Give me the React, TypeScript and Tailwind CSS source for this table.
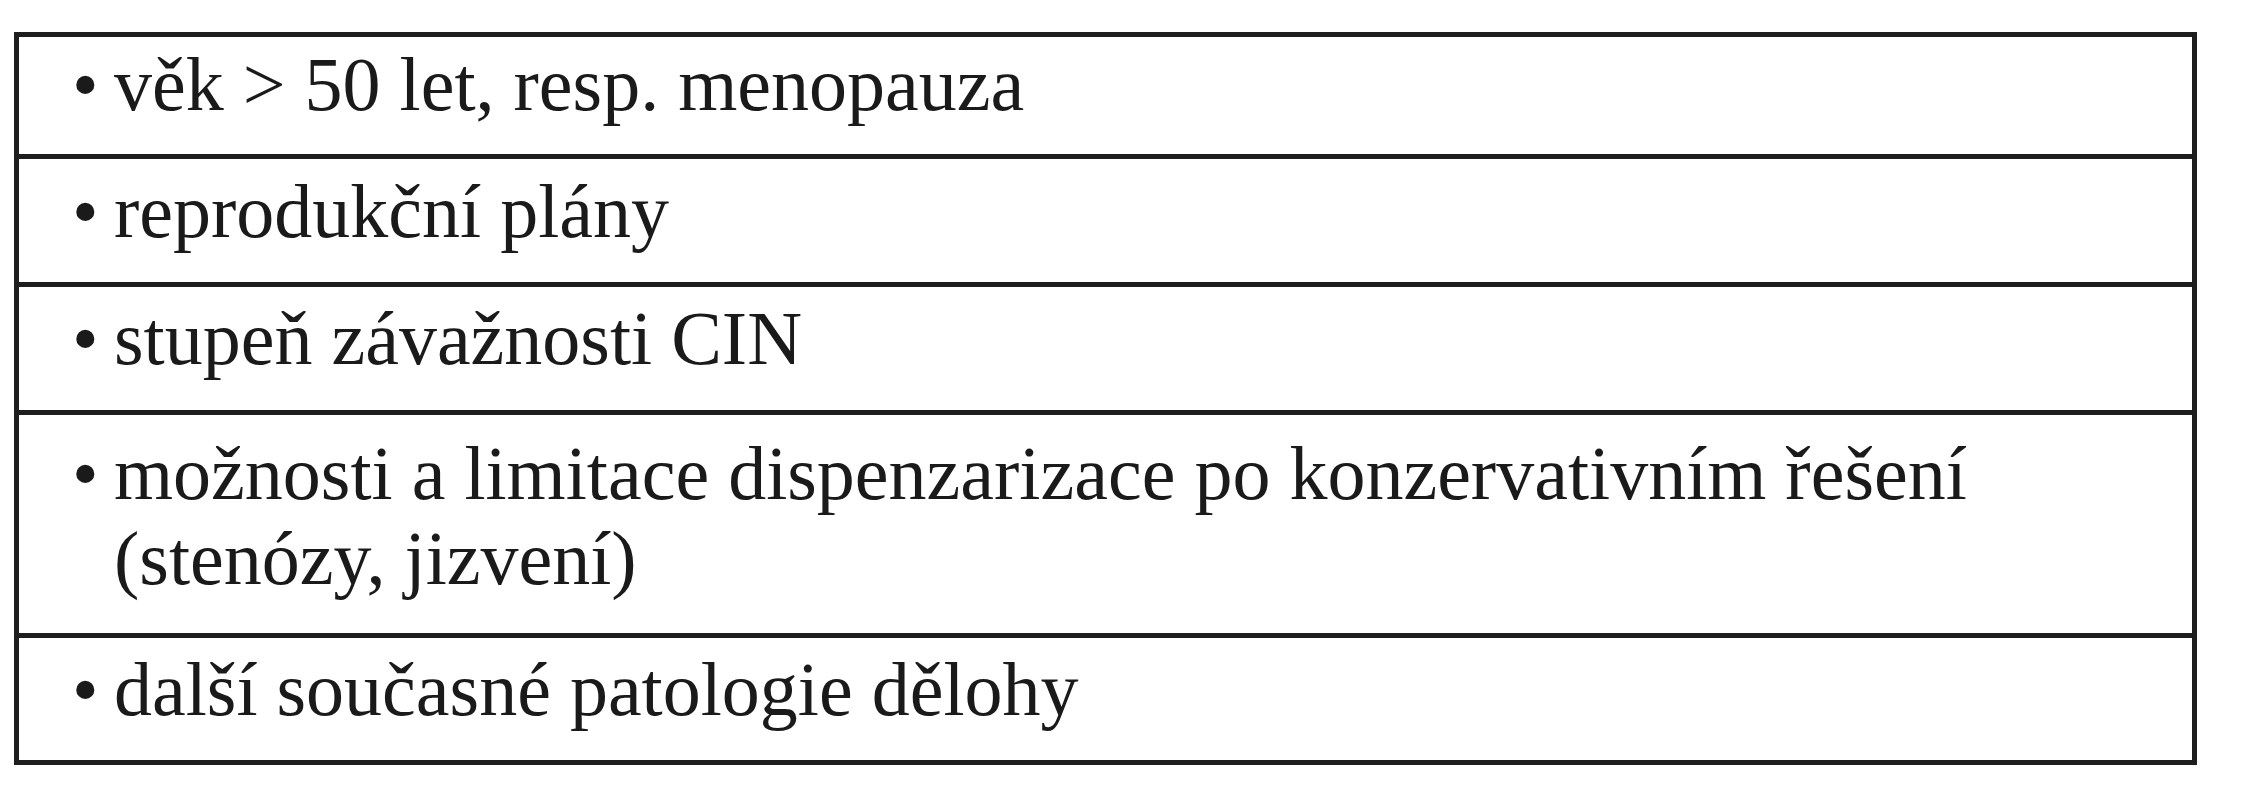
import React from 'react';

interface Row {
    lines: string[];
    pad: string;
}

const rows: Row[] = [
    { lines: ['věk > 50 let, resp. menopauza'], pad: 'pt-[5px] pb-[27px]' },
    { lines: ['reprodukční plány'], pad: 'pt-[10px] pb-[28px] border-t-[5px]' },
    { lines: ['stupeň závažnosti CIN'], pad: 'pt-[9px] pb-[29px] border-t-[5px]' },
    {
        lines: ['možnosti a limitace dispenzarizace po konzervativním řešení', '(stenózy, jizvení)'],
        pad: 'pt-[16px] pb-[32px] border-t-[5px]',
    },
    { lines: ['další současné patologie dělohy'], pad: 'pt-[9px] pb-[28px] border-t-[5px]' },
];

const App: React.FC = () => {
    return (
        <div className="w-[2256px] h-[800px] bg-white pt-[32px] pl-[14px]">
            <div className="w-[2183px] border-[5px] border-[#1e1e1e] text-[#1a1a1a] font-['Liberation_Serif',serif] text-[76px] leading-[85px]">
                {rows.map((row, i) => (
                    <div key={i} className={`flex pl-[53px] border-[#1e1e1e] ${row.pad}`}>
                        <span className="w-[42px] shrink-0">•</span>
                        <div>
                            {row.lines.map((line, j) => (
                                <div key={j}>{line}</div>
                            ))}
                        </div>
                    </div>
                ))}
            </div>
        </div>
    );
};

export default App;
